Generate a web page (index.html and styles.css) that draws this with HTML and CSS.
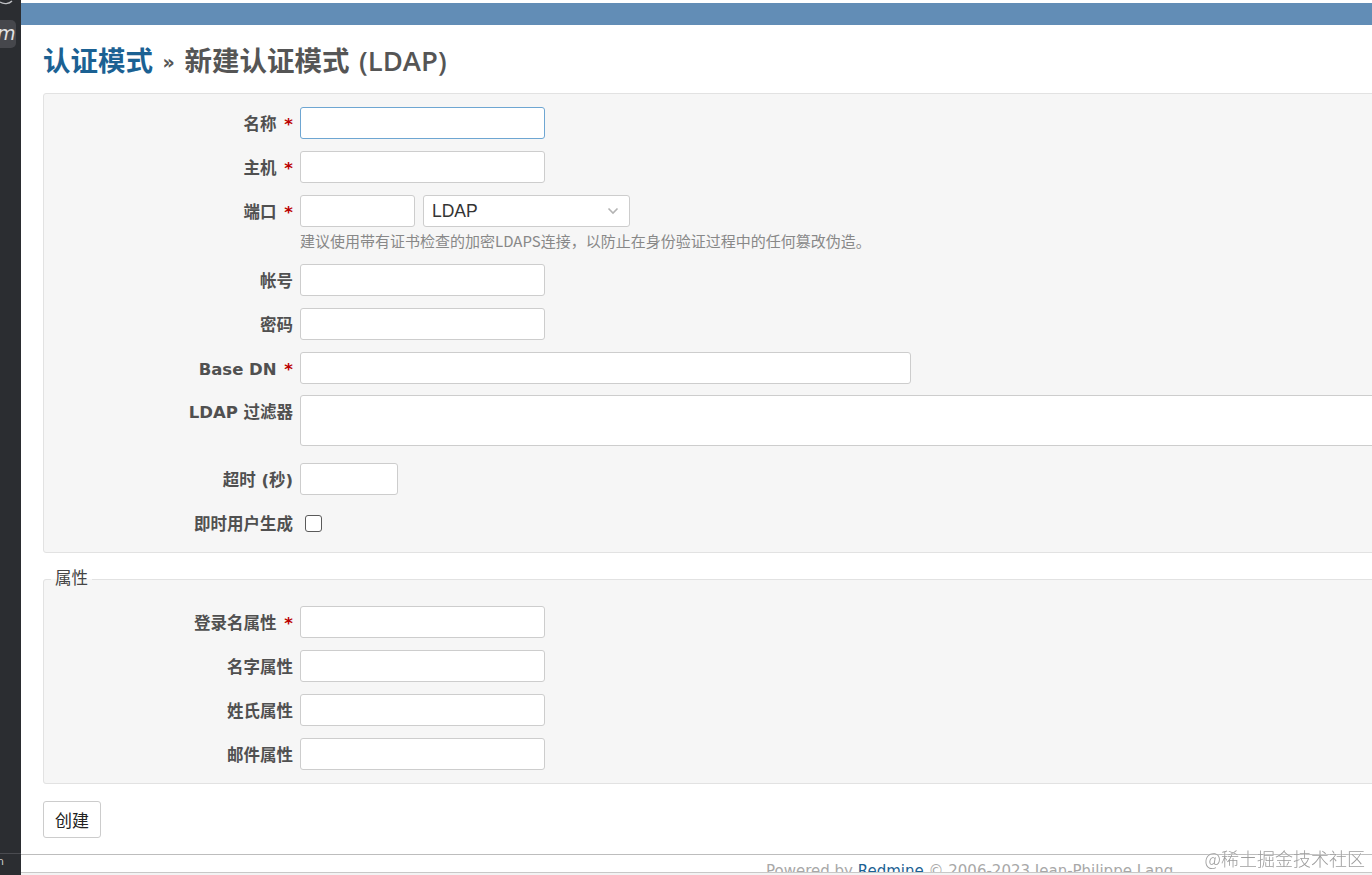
FILE: index.html
```html
<!DOCTYPE html>
<html lang="zh-CN">
<head>
<meta charset="utf-8">
<title>新建认证模式 (LDAP)</title>
<link rel="stylesheet" href="styles.css">
</head>
<body>
<div class="app">
  <aside class="rail">
    <svg class="rail-ring" width="14" height="8" viewBox="0 0 14 8"><path d="M0 2 A8 6 0 0 0 12 1" fill="none" stroke="#bfc0c4" stroke-width="1.3"/></svg>
    <div class="rail-tile">m</div>
    <div class="rail-spacer"></div>
    <div class="rail-bottom">n</div>
  </aside>
  <main class="main">
    <div class="topbar"></div>
    <div class="content">
      <h2 class="title"><a class="crumb" href="#">认证模式</a> <span class="sep">»</span> 新建认证模式 <span class="latin">(LDAP)</span></h2>

      <div class="box">
        <div class="row">
          <label class="lbl">名称 <span class="req">*</span></label>
          <div class="field"><input class="inp w245 focus" type="text"></div>
        </div>
        <div class="row">
          <label class="lbl">主机 <span class="req">*</span></label>
          <div class="field"><input class="inp w245" type="text"></div>
        </div>
        <div class="row">
          <label class="lbl">端口 <span class="req">*</span></label>
          <div class="field">
            <input class="inp w115" type="text">
            <div class="select-wrap">
              <select class="sel"><option>LDAP</option></select>
              <svg class="chev" width="12" height="8" viewBox="0 0 12 8"><path d="M1.5 1.5 L6 6 L10.5 1.5" fill="none" stroke="#b3b3b3" stroke-width="1.6"/></svg>
            </div>
            <em class="hint">建议使用带有证书检查的加密LDAPS连接，以防止在身份验证过程中的任何篡改伪造。</em>
          </div>
        </div>
        <div class="row">
          <label class="lbl">帐号</label>
          <div class="field"><input class="inp w245" type="text"></div>
        </div>
        <div class="row">
          <label class="lbl">密码</label>
          <div class="field"><input class="inp w245" type="password"></div>
        </div>
        <div class="row">
          <label class="lbl">Base DN <span class="req">*</span></label>
          <div class="field"><input class="inp w611" type="text"></div>
        </div>
        <div class="row row-ta">
          <label class="lbl">LDAP 过滤器</label>
          <div class="field"><textarea class="inp ta"></textarea></div>
        </div>
        <div class="row row-after-ta">
          <label class="lbl">超时 (秒)</label>
          <div class="field"><input class="inp w98" type="text"></div>
        </div>
        <div class="row">
          <label class="lbl">即时用户生成</label>
          <div class="field"><input class="chk" type="checkbox"></div>
        </div>
      </div>

      <fieldset class="box fs">
        <legend class="legend">属性</legend>
        <div class="row">
          <label class="lbl">登录名属性 <span class="req">*</span></label>
          <div class="field"><input class="inp w245" type="text"></div>
        </div>
        <div class="row">
          <label class="lbl">名字属性</label>
          <div class="field"><input class="inp w245" type="text"></div>
        </div>
        <div class="row">
          <label class="lbl">姓氏属性</label>
          <div class="field"><input class="inp w245" type="text"></div>
        </div>
        <div class="row">
          <label class="lbl">邮件属性</label>
          <div class="field"><input class="inp w245" type="text"></div>
        </div>
      </fieldset>

      <button class="btn" type="button">创建</button>
    </div>
    <footer class="footer">
      <div class="footer-text">Powered by <a class="flink" href="#">Redmine</a> © 2006-2023 Jean-Philippe Lang</div>
    </footer>
  </main>
</div>
<div class="scrollbar"></div>
<div class="watermark">@稀土掘金技术社区</div>
</body>
</html>
```
FILE: styles.css
```css
html, body {
  margin: 0;
  padding: 0;
  height: 100%;
  overflow: hidden;
  background: #ffffff;
}
body {
  font-family: "DejaVu Sans", "Noto Sans CJK SC", sans-serif;
  color: #505050;
}
.app {
  display: flex;
  height: 875px;
}
.rail {
  width: 21px;
  flex: 0 0 21px;
  background: #2b2d31;
  display: flex;
  flex-direction: column;
}
.rail-ring {
  display: block;
}
.rail-tile {
  margin-top: 12px;
  width: 16px;
  height: 28px;
  background: #46474c;
  border-radius: 0 5px 5px 0;
  color: #e2e2e2;
  font-family: "DejaVu Sans", sans-serif;
  font-style: italic;
  font-size: 19px;
  line-height: 26px;
  text-indent: -3px;
  overflow: hidden;
}
.rail-spacer {
  flex: 1;
}
.rail-bottom {
  height: 21px;
  border-top: 1px solid #4a4b50;
  color: #c9c9c9;
  font-size: 11px;
  line-height: 16px;
  text-indent: -3px;
  overflow: hidden;
}
.main {
  flex: 1;
  min-width: 0;
  display: flex;
  flex-direction: column;
  overflow: hidden;
}
.topbar {
  margin-top: 3px;
  height: 22px;
  background: #628db6;
  flex: 0 0 22px;
}
.content {
  padding-left: 22px;
  width: 1500px;
}
.title {
  margin: 19px 0 14px 0;
  font-size: 27.5px;
  line-height: 34px;
  font-weight: bold;
  color: #555555;
  font-family: "DejaVu Sans", "Noto Sans CJK SC", sans-serif;
}
.latin {
  font-family: "Open Sans", "DejaVu Sans", sans-serif;
  font-weight: 600;
}
.crumb {
  color: #1b6193;
  text-decoration: none;
}
.sep {
  font-size: 19px;
  vertical-align: 2px;
}
.box {
  box-sizing: border-box;
  width: 1450px;
  background: #f6f6f6;
  border: 1px solid #e2e2e2;
  border-radius: 3px;
  padding: 13px 0 13px 0;
  margin: 0;
}
.fs {
  margin-top: 16px;
  padding: 17px 0 13px 0;
  min-width: 0;
}
.legend {
  margin-left: 7px;
  padding: 0 4px;
  font-size: 16.5px;
  line-height: 20px;
  color: #454545;
}
.row {
  display: grid;
  grid-template-columns: 249px 1fr;
  column-gap: 7px;
  align-items: start;
}
.row + .row {
  margin-top: 12px;
}
.row.row-ta {
  margin-top: 11px;
}
.row.row-after-ta {
  margin-top: 17px;
}
.lbl {
  box-sizing: border-box;
  height: 32px;
  padding-top: 3px;
  text-align: right;
  font-weight: bold;
  font-size: 16.5px;
  line-height: 29px;
  color: #505050;
  white-space: nowrap;
}
.req {
  color: #bb0000;
  margin-left: 2px;
}
.field {
  display: flex;
  flex-wrap: wrap;
  column-gap: 8px;
  align-items: center;
  min-height: 32px;
}
.inp {
  box-sizing: border-box;
  display: block;
  height: 32px;
  margin: 0;
  padding: 0 8px;
  border: 1px solid #cdcdcd;
  border-radius: 3px;
  background: #ffffff;
  font-family: "DejaVu Sans", "Noto Sans CJK SC", sans-serif;
  font-size: 16px;
  outline: none;
}
.focus {
  border-color: #6ea6d2;
}
.w245 { width: 245px; }
.w115 { width: 115px; }
.w611 { width: 611px; }
.w98 { width: 98px; }
.ta {
  width: 1120px;
  height: 51px;
  resize: none;
}
.select-wrap {
  position: relative;
  width: 207px;
  height: 32px;
}
.sel {
  box-sizing: border-box;
  width: 207px;
  height: 32px;
  margin: 0;
  padding: 0 0 0 8px;
  border: 1px solid #cdcdcd;
  border-radius: 3px;
  background: #ffffff;
  color: #333333;
  font-family: "Liberation Sans", Arial, sans-serif;
  font-size: 17.5px;
  -webkit-appearance: none;
  appearance: none;
  outline: none;
}
.chev {
  position: absolute;
  right: 11px;
  top: 12px;
  pointer-events: none;
}
.hint {
  flex-basis: 100%;
  margin-top: 3px;
  font-style: normal;
  font-family: "Noto Sans CJK SC", "DejaVu Sans", sans-serif;
  font-size: 15px;
  line-height: 22px;
  color: #888888;
  white-space: nowrap;
}
.chk {
  -webkit-appearance: none;
  appearance: none;
  box-sizing: border-box;
  width: 17px;
  height: 17px;
  margin: 0 0 0 5px;
  border: 1.5px solid #5a5a5a;
  border-radius: 3px;
  background: #ffffff;
}
.btn {
  display: block;
  box-sizing: border-box;
  margin-top: 17px;
  width: 58px;
  height: 37px;
  padding: 0;
  border: 1px solid #cccccc;
  border-radius: 3px;
  background: #ffffff;
  color: #222222;
  font-family: "Noto Sans CJK SC", sans-serif;
  font-size: 17px;
}
.footer {
  margin-top: 16px;
  border-top: 1px solid #bdbdbd;
  padding-top: 6px;
}
.footer-text {
  padding-left: 745px;
  font-size: 15px;
  line-height: 20px;
  color: #a8a8a8;
  white-space: nowrap;
}
.flink {
  color: #1b6193;
  text-decoration: none;
}
.scrollbar {
  position: fixed;
  left: 21px;
  right: 0;
  top: 872px;
  height: 3px;
  background: #f3f3f3;
  border-top: 1px solid #c8c8c8;
}
.watermark {
  position: fixed;
  right: 7px;
  top: 846px;
  font-family: "Noto Sans CJK SC", sans-serif;
  font-size: 18px;
  line-height: 24px;
  color: #9d9d9d;
  font-weight: 300;
  text-shadow: 0 0 2px #ffffff;
}
```
